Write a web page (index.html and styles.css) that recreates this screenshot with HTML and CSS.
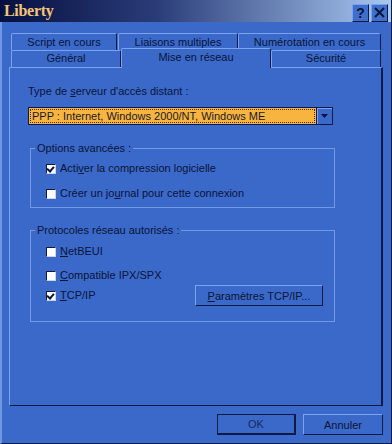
FILE: index.html
```html
<!DOCTYPE html>
<html lang="fr">
<head>
    <meta charset="UTF-8">
    <title>Liberty</title>
    <link rel="stylesheet" href="styles.css">
</head>
<body>
    <div class="window">
        <div class="titlebar">
            <span class="title">Liberty</span>
            <div class="title-buttons">
                <span class="tbtn">?</span>
                <span class="tbtn">
                    <svg width="11" height="11" viewBox="0 0 11 11"><path d="M1 1 L10 10 M10 1 L1 10" stroke="#0a1438" stroke-width="2"/></svg>
                </span>
            </div>
        </div>

        <!-- Onglets -->
        <div class="tabs">
            <div class="tab-row back">
                <div class="tab w-script">Script en cours</div>
                <div class="tab w-liaisons">Liaisons multiples</div>
                <div class="tab w-numero">Numérotation en cours</div>
            </div>
            <div class="tab-row front">
                <div class="tab w-general">Général</div>
                <div class="tab active w-mise">Mise en réseau</div>
                <div class="tab w-secu">Sécurité</div>
            </div>
        </div>

        <div class="panel">
            <div class="label">Type de <u>s</u>erveur d'accès distant :</div>
            <div class="combo">
                <div class="combo-value"><span>PPP : Internet, Windows 2000/NT, Windows ME</span></div>
                <div class="combo-btn">
                    <svg width="7" height="4" viewBox="0 0 7 4"><path d="M0 0 H7 L3.5 4 Z" fill="#0a1438"/></svg>
                </div>
            </div>

            <fieldset class="group first">
                <legend>Options avancées :</legend>
                <div class="check-row"><span class="box checked"></span>Acti<u>v</u>er la compression logicielle</div>
                <div class="check-row gap12"><span class="box"></span>Créer un jo<u>u</u>rnal pour cette connexion</div>
            </fieldset>

            <fieldset class="group second">
                <legend>Protocoles réseau autorisés :</legend>
                <div class="check-row"><span class="box"></span><u>N</u>etBEUI</div>
                <div class="check-row gap11"><span class="box"></span><u>C</u>ompatible IPX/SPX</div>
                <div class="check-row last">
                    <div class="check-label"><span class="box checked"></span><u>T</u>CP/IP</div>
                    <button class="btn wide"><u>P</u>aramètres TCP/IP...</button>
                </div>
            </fieldset>
        </div>

        <div class="footer">
            <button class="btn default">OK</button>
            <button class="btn">Annuler</button>
        </div>
    </div>
</body>
</html>
```

FILE: styles.css
```css
body {
    margin: 0;
    padding: 0;
    background-color: #3b69c9;
    font-family: "Liberation Sans", Arial, sans-serif;
    font-size: 11px;
    color: #0a1438;
}
.window {
    width: 392px;
    height: 444px;
    box-sizing: border-box;
    border-left: 2px solid #6f97e4;
    border-right: 1px solid #0c1a44;
    border-bottom: 1px solid #0c1a44;
    background-color: #3b69c9;
}
.titlebar {
    height: 22px;
    margin-left: -2px;
    display: flex;
    justify-content: space-between;
    align-items: center;
    background-image: linear-gradient(to right, #061040, #2a3c78 40%, #a8c8f0);
}
.title {
    font-family: "Liberation Serif", "Times New Roman", serif;
    font-weight: bold;
    font-size: 16px;
    letter-spacing: -0.3px;
    color: #f2c478;
    padding-left: 4px;
}
.title-buttons {
    display: flex;
    gap: 2px;
    padding-right: 3px;
    margin-top: 3px;
}
.tbtn {
    width: 15px;
    height: 16px;
    background-color: #3f6fcc;
    border-top: 1px solid #7ba2ee;
    border-left: 1px solid #7ba2ee;
    border-right: 1px solid #0c1a44;
    border-bottom: 1px solid #0c1a44;
    display: flex;
    align-items: center;
    justify-content: center;
    font-weight: bold;
    font-size: 14px;
    color: #0a1438;
}
.tabs {
    padding-top: 11px;
    padding-left: 9px;
}
.tab-row {
    display: flex;
}
.tab-row.front {
    margin-top: -1px;
    align-items: flex-end;
    height: 18px;
}
.tab {
    box-sizing: border-box;
    height: 17px;
    border-top: 1px solid #7ba2ee;
    border-left: 1px solid #7ba2ee;
    border-right: 1px solid #0c1a44;
    border-radius: 2px 2px 0 0;
    text-align: center;
    line-height: 15px;
}
.tab-row.back .tab {
    line-height: 16px;
}
.w-script { width: 106px; }
.w-liaisons { width: 120px; margin-left: 1px; }
.w-numero { width: 143px; }
.w-general { width: 110px; }
.w-mise { width: 150px; }
.w-secu { width: 110px; }
.tab.active {
    height: 20px;
    margin-bottom: -1px;
    background-color: #3b69c9;
    position: relative;
    z-index: 2;
    line-height: 17px;
}
.panel {
    margin-left: 7px;
    width: 374px;
    height: 339px;
    box-sizing: border-box;
    border-top: 1px solid #7ba2ee;
    border-left: 1px solid #7ba2ee;
    border-right: 2px solid #0c1a44;
    border-bottom: 1px solid #0c1a44;
    padding: 17px 0 0 18px;
}
.label {
    line-height: 13px;
}
.combo {
    margin-top: 9px;
    width: 305px;
    height: 18px;
    box-sizing: border-box;
    border: 1px solid #0c1a44;
    display: flex;
    background-color: #f7b43e;
}
.combo-value {
    flex: 1;
    padding: 1px;
}
.combo-value span {
    display: block;
    border: 1px dotted #3a2a10;
    box-sizing: border-box;
    height: 14px;
    line-height: 12px;
    padding-left: 1px;
    color: #1a1a2a;
}
.combo-btn {
    width: 15px;
    background-color: #3b69c9;
    border-left: 1px solid #0c1a44;
    box-shadow: inset 1px 1px 0 #7ba2ee;
    display: flex;
    align-items: center;
    justify-content: center;
}
.group {
    margin: 0 0 0 2px;
    width: 305px;
    box-sizing: border-box;
    border: 1px solid #7199e4;
    padding: 0 11px 0 15px;
}
.group legend {
    line-height: 13px;
    padding: 0 2px;
    margin-left: -11px;
}
.group.first {
    margin-top: 17px;
    padding-top: 7px;
    padding-bottom: 7px;
}
.group.second {
    margin-top: 16px;
    padding-top: 8px;
    padding-bottom: 15px;
}
.check-row {
    display: flex;
    align-items: center;
    line-height: 13px;
}
.check-label {
    display: flex;
    align-items: center;
}
.gap12 { margin-top: 12px; }
.gap11 { margin-top: 11px; }
.check-row.last {
    margin-top: 3px;
    justify-content: space-between;
}
.box {
    width: 10px;
    height: 10px;
    box-sizing: border-box;
    background-color: #ffffff;
    border-top: 1px solid #0c1a44;
    border-left: 1px solid #0c1a44;
    border-right: 1px solid #c8d4f0;
    border-bottom: 1px solid #c8d4f0;
    margin-right: 4px;
    position: relative;
}
.box.checked::after {
    content: "";
    position: absolute;
    left: 1px;
    top: 0px;
    width: 3px;
    height: 5px;
    border-right: 2px solid #0a1438;
    border-bottom: 2px solid #0a1438;
    transform: rotate(40deg);
}
.btn {
    font-family: "Liberation Sans", Arial, sans-serif;
    font-size: 11px;
    color: #0a1438;
    background-color: #3b69c9;
    height: 21px;
    box-sizing: border-box;
    border-top: 1px solid #7ba2ee;
    border-left: 1px solid #7ba2ee;
    border-right: 1px solid #0c1a44;
    border-bottom: 1px solid #0c1a44;
    padding: 0;
    width: 80px;
}
.btn.wide {
    width: 128px;
}
.btn.default {
    width: 79px;
    outline: 1px solid #0c1a44;
    outline-offset: -1px;
    border-right-width: 2px;
    border-bottom-width: 2px;
    color: #1a2a5a;
}
.footer {
    display: flex;
    justify-content: flex-end;
    gap: 7px;
    margin-top: 8px;
    padding-right: 8px;
}
```
